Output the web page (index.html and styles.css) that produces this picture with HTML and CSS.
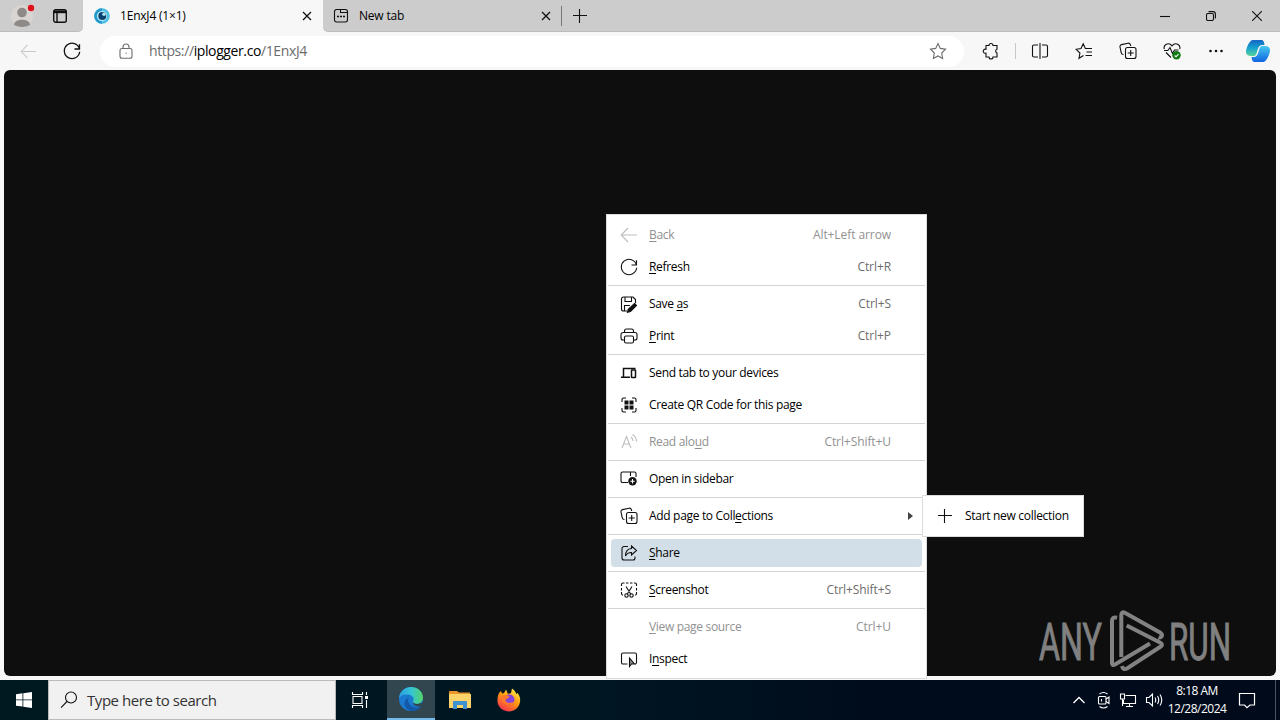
FILE: index.html
```html
<!DOCTYPE html>
<html lang="en">
<head>
    <meta charset="UTF-8">
    <meta name="viewport" content="width=device-width, initial-scale=1.0">
    <title>1EnxJ4 (1×1)</title>
    <link rel="stylesheet" href="styles.css">
</head>
<body>

    <!-- icons used more than once -->
    <svg class="defs">
        <symbol id="i-close" viewBox="0 0 10 10"><path d="M1 1l8 8M9 1l-8 8"/></symbol>
        <symbol id="i-back" viewBox="0 0 18 18"><path d="M17 9H1.5M8 2L1.2 9 8 16"/></symbol>
        <symbol id="i-refresh" viewBox="0 0 18 18"><path d="M16.5 7A7.7 7.7 0 1 0 16.7 9.8M16.5 2.2V7h-5"/></symbol>
        <symbol id="i-collect" viewBox="0 0 18 18"><path d="M4.5 12.5l-1-.2a2 2 0 0 1-1.3-1.6L1 5a2 2 0 0 1 1.5-2.4L9 1.2a2 2 0 0 1 2.3 1.3l.5 1.5"/><rect x="6.5" y="5.5" width="10.5" height="11" rx="2"/><path d="M11.7 8v6M8.7 11h6"/></symbol>
        <symbol id="i-plus" viewBox="0 0 14 14"><path d="M6.5 0v14M0 6.5h14"/></symbol>
    </svg>

    <div class="titlebar">
        <div class="titlebar-left">
            <svg class="avatar" width="24" height="24" viewBox="0 0 24 24"><circle cx="11" cy="12" r="11" fill="#d8d5d3"/><circle cx="11" cy="8.5" r="4.8" fill="#8d8a88"/><path d="M3 21c0-7 16-7 16 0q-8 4-16 0z" fill="#8d8a88"/><circle cx="20" cy="4" r="3.2" fill="#e0101b"/></svg>
            <svg class="ico tabs-ico" width="14" height="14" viewBox="0 0 14 14"><rect x=".7" y=".7" width="12.6" height="12.6" rx="2"/><path d="M1 2.3h12M4 4v9" /><path d="M1 3.5h12"/></svg>
        </div>
        <div class="tab tab-active">
            <svg width="16" height="16" viewBox="0 0 16 16"><circle cx="8" cy="8" r="6.5" fill="#b9e9f5" stroke="#4dbfe2" stroke-width="2.6"/><path d="M8 1.5A6.500 6.500 0 0 0 8 14.500" fill="none" stroke="#2398cc" stroke-width="2.600"/><circle cx="8.300" cy="8" r="4" fill="#0b4272"/><circle cx="10" cy="6.2" r="1.8" fill="#a9e3f3"/></svg>
            <span class="tab-title">1EnxJ4 (1×1)</span>
            <svg class="ico close" width="10" height="10"><use href="#i-close"/></svg>
        </div>
        <div class="titlebar-right">
            <div class="tab">
                <svg class="ico" width="16" height="16" viewBox="0 0 16 16"><rect x="1.5" y="1.5" width="13" height="12.5" rx="2.2"/><path d="M7.5 1.500v3h7"/><path d="M4 8.500h2M7 8.500h2M10 8.500h2" stroke-width="1.500"/></svg>
                <span class="tab-title">New tab</span>
                <svg class="ico close" width="10" height="10"><use href="#i-close"/></svg>
            </div>
            <div class="tab-sep"></div>
            <svg class="ico new-tab" width="14" height="14"><use href="#i-plus"/></svg>
            <div class="window-buttons">
                <svg class="ico" width="10" height="10" viewBox="0 0 10 10"><path d="M0 5.5h10"/></svg>
                <svg class="ico" width="10" height="10" viewBox="0 0 10 10"><rect x=".5" y="2.5" width="7" height="7" rx="1.5"/><path d="M2.5.6H7A2.4 2.4 0 0 1 9.4 3v4.5"/></svg>
                <svg class="ico" width="10" height="10" viewBox="0 0 10 10"><path d="M0 0l10 10M10 0L0 10"/></svg>
            </div>
        </div>
    </div>

    <div class="toolbar">
        <svg class="ico faded" width="17" height="17"><use href="#i-back"/></svg>
        <svg class="ico reload" width="18" height="18"><use href="#i-refresh"/></svg>
        <div class="address">
            <svg class="ico grey" width="14" height="16" viewBox="0 0 14 16"><rect x="1" y="5.5" width="12" height="9.7" rx="2"/><path d="M4 5.5V4a3 3 0 0 1 6 0v1.5M6.5 10.3h1.2"/></svg>
            <span class="url">https://<b>iplogger.co</b>/1EnxJ4</span>
            <svg class="ico grey" width="18" height="18" viewBox="0 0 18 18"><path d="M9 1.5l2.3 4.9 5.2.8-3.8 3.8.9 5.4L9 13.9l-4.6 2.5.9-5.4L1.5 7.2l5.2-.8z"/></svg>
        </div>
        <div class="tools">
            <svg class="ico" width="18" height="18" viewBox="0 0 18 18"><path d="M4 3.500H7a2 2 0 0 1 4 0h4v3.700a2 2 0 0 0 0 3.800v4h-4a2 2 0 0 1-4 0H4v-3.800a2.100 2.100 0 1 1 0-4z"/></svg>
            <i class="tool-sep"></i>
            <svg class="ico" width="18" height="18" viewBox="0 0 18 18"><path d="M7 3H3a1.500 1.500 0 0 0-1.500 1.500v9A1.500 1.500 0 0 0 3 15h4M11 3h4a1.500 1.500 0 0 1 1.500 1.500v9A1.500 1.500 0 0 1 15 15h-4M9 1v16"/></svg>
            <svg class="ico" width="18" height="18" viewBox="0 0 18 18"><path d="M8.500 13.500L4 16.300l.9-5.300-3.800-3.700L6 6.500l2.200-4.800L10.400 6.500H17M11.500 10H17M10.500 13.500H17"/></svg>
            <svg class="ico" width="18" height="18"><use href="#i-collect"/></svg>
            <svg class="ico" width="18" height="18" viewBox="0 0 18 18"><path d="M1.300 7C0 3 5.500-.5 9 3.800 12.500-.5 18 3 16.700 7M3 10.500l5 5M1 8.500h3.800L7 5.500l2.500 6 2-3.500h4"/><circle cx="13.500" cy="13.300" r="4.200" fill="#117a15" stroke="none"/><path d="M11.700 13.500l1.300 1.300 2.500-2.600" stroke="#fff"/></svg>
            <svg class="dots" width="18" height="18" viewBox="0 0 18 18"><circle cx="3.500" cy="9" r="1.300"/><circle cx="9" cy="9" r="1.300"/><circle cx="14.500" cy="9" r="1.300"/></svg>
        </div>
        <svg class="copilot" width="24" height="24" viewBox="0 0 24 24">
            <defs>
                <linearGradient id="cp1" x1="0" y1="0" x2="0" y2="1"><stop offset="0" stop-color="#1463c4"/><stop offset=".5" stop-color="#16a3cf"/><stop offset="1" stop-color="#57d59a"/></linearGradient>
                <linearGradient id="cp2" x1="0" y1="0" x2="0" y2="1"><stop offset="0" stop-color="#45c9f1"/><stop offset="1" stop-color="#1263df"/></linearGradient>
            </defs>
            <path d="M15.500 1H7C3.500 1 0 9 0 13c0 2.500 2 4 5 4h3.500Q10.500 16 11.500 11 13 6 16 6h2.500q-.5-5-3-5z" fill="url(#cp1)"/>
            <path d="M8.500 23H17c3.500 0 7-8 7-12 0-2.500-2-4-5-4h-3.500Q13.500 8 12.500 13 11 18 8 18H5.500q.5 5 3 5z" fill="url(#cp2)"/>
        </svg>
    </div>

    <div class="page"></div>

    <svg class="watermark" width="194" height="62" viewBox="0 0 194 62">
        <text transform="translate(1 50) scale(.61 1)" textLength="103" lengthAdjust="spacingAndGlyphs">ANY</text>
        <text transform="translate(131 50) scale(.58 1)" textLength="107" lengthAdjust="spacingAndGlyphs">RUN</text>
        <path d="M79 7.700Q74 6.500 74 11v42q0 3 3 1.500l35-21M83.300 47V5q0-4 4-2L122 22.500q3 2 1.500 4-1 1.500-3 .8M88.700 15.500L122 32.500q4 2 0 4.500L89 58.500q-4 2-5-2.500"/>
    </svg>

    <div class="menu">
        <div class="item off"><svg class="ico" width="18" height="18"><use href="#i-back"/></svg><span><u>B</u>ack</span><kbd>Alt+Left arrow</kbd></div>
        <div class="item"><svg class="ico" width="18" height="18"><use href="#i-refresh"/></svg><span><u>R</u>efresh</span><kbd>Ctrl+R</kbd></div>
        <hr>
        <div class="item"><svg class="ico" width="18" height="18" viewBox="0 0 18 18"><path d="M7 16H3.500a2 2 0 0 1-2-2V4a2 2 0 0 1 2-2H13l2.500 2.500V8M5 2v4.500h6.500V2M4.500 16v-5.500H10"/><path d="M14.500 8.500l2 2-6 6-3 .8.800-3z" fill="#111"/></svg><span>Save <u>a</u>s</span><kbd>Ctrl+S</kbd></div>
        <div class="item"><svg class="ico" width="18" height="18" viewBox="0 0 18 18"><path d="M4.500 13H3a2 2 0 0 1-2-2V7.500a2 2 0 0 1 2-2h12a2 2 0 0 1 2 2V11a2 2 0 0 1-2 2h-1.500M4.500 5.500V4a2 2 0 0 1 2-2h5a2 2 0 0 1 2 2v1.500"/><rect x="4.500" y="9" width="9" height="7" rx="1.500"/></svg><span><u>P</u>rint</span><kbd>Ctrl+P</kbd></div>
        <hr>
        <div class="item"><svg class="ico" width="18" height="18" viewBox="0 0 18 18"><path d="M15.500 4.500H3.500v8.500M1 13.300h9" stroke-width="1.500"/><rect x="11.500" y="6" width="4" height="7.500" rx=".5" stroke-width="1.500"/></svg><span>Send tab to your devices</span></div>
        <div class="item"><svg class="ico" width="18" height="18" viewBox="0 0 18 18"><path d="M2 6V3.500A1.500 1.500 0 0 1 3.500 2H6M12 2h2.500A1.500 1.500 0 0 1 16 3.500V6M16 12v2.500a1.500 1.500 0 0 1-1.500 1.500H12M6 16H3.500A1.500 1.500 0 0 1 2 14.500V12"/><path d="M4.500 4.500h4v4h-4zM9.500 4.500h4v4h-4zM4.500 9.500h4v4h-4zM9.500 9.500h4v4h-4z" fill="#111" stroke="none"/></svg><span>Create QR Code for this page</span></div>
        <hr>
        <div class="item off"><svg class="ico" width="18" height="18" viewBox="0 0 18 18"><path d="M2 15L6.500 3.500 11 15M3.500 11h6M11 4q2 1.500 2 4M12.500 1.500q4 2.500 4 7"/></svg><span>Read alo<u>u</u>d</span><kbd>Ctrl+Shift+U</kbd></div>
        <hr>
        <div class="item"><svg class="ico" width="18" height="18" viewBox="0 0 18 18"><path d="M8 12.500H2.500A1.500 1.500 0 0 1 1 11V3.500A1.500 1.500 0 0 1 2.500 2h12A1.500 1.500 0 0 1 16 3.500V7M10.500 2v4"/><circle cx="12.500" cy="11.200" r="4.200" fill="#111" stroke="none"/><path d="M12.500 9v4.400M10.300 11.200h4.400" stroke="#fff"/></svg><span>Open in sidebar</span></div>
        <hr>
        <div class="item"><svg class="ico" width="18" height="18"><use href="#i-collect"/></svg><span>Add page to Coll<u>e</u>ctions</span><i class="arrow"></i></div>
        <hr>
        <div class="item hover"><svg class="ico" width="18" height="18" viewBox="0 0 18 18"><path d="M8 2.500H4a2 2 0 0 0-2 2V14a2 2 0 0 0 2 2h9a2 2 0 0 0 2-2v-1.500"/><path d="M11.500 2l5 4.500-5 4.500V8.500Q7.500 8.300 5.500 12 5.500 5 11.500 4.500z"/></svg><span><u>S</u>hare</span></div>
        <hr>
        <div class="item"><svg class="ico" width="18" height="18" viewBox="0 0 18 18"><path d="M1.500 5V3.500A1.500 1.500 0 0 1 3 2h1.500M6 2h2.500M10 2h2.500M14 2h1a1.500 1.500 0 0 1 1.500 1.500V5M16.500 7v2.500M16.500 11v1.500A1.500 1.500 0 0 1 15 14M1.500 7v2.500M1.500 11v1.500A1.500 1.500 0 0 0 3 14M6 5.500l5 8M12 5.500l-5 8"/><circle cx="6.500" cy="14.500" r="1.700"/><circle cx="11.500" cy="14.500" r="1.700"/></svg><span><u>S</u>creenshot</span><kbd>Ctrl+Shift+S</kbd></div>
        <hr>
        <div class="item off"><svg width="18" height="18"></svg><span><u>V</u>iew page source</span><kbd>Ctrl+U</kbd></div>
        <div class="item"><svg class="ico" width="18" height="18" viewBox="0 0 18 18"><path d="M7.500 14H3a1.500 1.500 0 0 1-1.500-1.500v-8A1.500 1.500 0 0 1 3 3h12a1.500 1.500 0 0 1 1.500 1.500v8A1.500 1.500 0 0 1 15 14"/><path d="M9.500 8v8.500l2-2.500h3z" fill="#888"/></svg><span>I<u>n</u>spect</span></div>
    </div>

    <div class="submenu">
        <svg class="ico" width="14" height="14"><use href="#i-plus"/></svg>
        <span>Start new collection</span>
    </div>

    <div class="taskbar">
        <div class="start">
            <svg width="16" height="16" viewBox="0 0 16 16" fill="#fff"><path d="M0 2.200l6.500-.9v6.200H0zM7.300 1.200L16 0v7.500H7.300zM0 8.300h6.500v6.300L0 13.700zM7.300 8.300H16V16l-8.700-1.200z"/></svg>
        </div>
        <div class="search">
            <svg class="ico" width="18" height="18" viewBox="0 0 18 18"><circle cx="11" cy="6.500" r="5.500"/><path d="M7 10.500L1 16.700"/></svg>
            <span>Type here to search</span>
        </div>
        <div class="app">
            <svg class="ico light" width="18" height="18" viewBox="0 0 18 18"><path d="M2 5.500h9v7H2zM1.500 1v2.500h10V1M1.500 17v-2.500h10V17M15.500 1v3M15.500 9v8"/><path d="M14 5h3v3h-3z" fill="#fff" stroke="none"/></svg>
        </div>
        <div class="app app-active">
            <svg width="24" height="24" viewBox="0 0 24 24">
                <defs>
                    <linearGradient id="ed1" x1="0" x2="1"><stop offset="0" stop-color="#2a9fe0"/><stop offset=".5" stop-color="#35c4d6"/><stop offset="1" stop-color="#55d46a"/></linearGradient>
                </defs>
                <circle cx="12" cy="12" r="12" fill="#1b7ad0"/>
                <path d="M0 11C1 4 6 0 12 0c7 0 12 5 12 10.500 0 4-3 6.500-6.500 6.500-3 0-4.500-1.300-3.500-2.800C16 11 13 8 9 7.500 5 7 2 8 0 11z" fill="url(#ed1)"/>
                <path d="M9.500 11c-2 5 3 9.500 8 9.500 2 0 4-.7 5-1.600-2 3-6 5.100-10 5.100-4-.5-7-4-7-8 0-2.500 1.500-4.500 4-5z" fill="#1458a8"/>
                <path d="M14 14.800c1.500 2.700 5.500 3 9 .8l1 .4-1.800 3c-3.500 1.500-8.500 0-8.200-4.200z" fill="#32464f"/>
            </svg>
        </div>
        <div class="app">
            <svg width="22" height="20" viewBox="0 0 22 20"><path d="M0 2q0-1 1-1h7l2 1.500h11v15H0z" fill="#e9952b"/><path d="M0 4h22v14H0z" fill="#fbd36b"/><path d="M4 19v-7q0-1 1-1h12q1 0 1 1v7h-4v-4H8v4z" fill="#3f92d2"/></svg>
        </div>
        <div class="app">
            <svg width="24" height="24" viewBox="0 0 24 24">
                <defs><linearGradient id="ff1" x1=".8" y1="0" x2=".2" y2="1"><stop offset="0" stop-color="#fff04a"/><stop offset=".45" stop-color="#ff980e"/><stop offset="1" stop-color="#f52a57"/></linearGradient></defs>
                <path d="M2 5l2-2 1 2.500L7 5l2-3.500L11 6l3-1 1-4.500c3 2 4 4 4 5.500l1.500-1C23 8 23.500 11 23 14c-1 6-6 9.500-11 9.500S1 20 .5 13.500C.3 10 1 7 2 5z" fill="url(#ff1)"/>
                <circle cx="12.500" cy="11.500" r="5" fill="#8544dc"/>
                <path d="M4 9c3-2.500 6-2 8.500-.5C11 11 9 10.500 8.500 12c0 3 5 4 8 1.500-1 5-11 5-12.500-4.500z" fill="#ff7a2a"/>
            </svg>
        </div>
        <div class="tray">
            <svg class="ico light" width="14" height="14" viewBox="0 0 14 14"><path d="M1.500 10L7 4.500l5.500 5.500" stroke-width="1.300"/></svg>
            <svg class="ico light" width="14" height="18" viewBox="0 0 14 18"><rect x="1.500" y="5.500" width="7.500" height="7.500" rx="1"/><path d="M9 8l3-2v6.500l-3-2M2.500 3q4-3 8 0M2.500 15.500q4 3 8 0M4.500 8v2.500"/></svg>
            <svg class="ico light" width="18" height="16" viewBox="0 0 18 16"><path d="M6.500 3.500h10v8h-12V8M10.500 11.500V14M7 14.500h7M1.500 2h4v5h-4zM3.500 7v7"/></svg>
            <svg class="ico light" width="18" height="16" viewBox="0 0 18 16"><path d="M1.500 5.500H4l3.500-3.500v12L4 10.500H1.500zM10 5.500q1.500 2.500 0 5M12.500 4q2.500 4 0 8M15 2.500q3.500 5.500 0 11"/></svg>
            <div class="clock"><span>8:18 AM</span><span>12/28/2024</span></div>
            <svg class="ico light" width="18" height="18" viewBox="0 0 18 18"><path d="M1.500 2.500h15v11.500H12L9 16.700 6.500 14h-5z" stroke-width="1.200"/></svg>
            <i class="desktop-edge"></i>
        </div>
    </div>

</body>
</html>
```
FILE: styles.css
```css
* {
    box-sizing: border-box;
}
body {
    margin: 0;
    width: 1280px;
    height: 720px;
    overflow: hidden;
    display: flex;
    flex-direction: column;
    position: relative;
    background: #f7f7f7;
    font-family: "Open Sans", sans-serif;
    font-size: 12px;
    color: #000;
}
svg {
    display: block;
    flex: none;
}
.defs {
    position: absolute;
    width: 0;
    height: 0;
}
.ico {
    fill: none;
    stroke: #111;
    stroke-width: 1.1;
}
.grey {
    stroke: #6c6c6c;
}
.faded {
    stroke: #c9c9c9;
}
.light {
    stroke: #fff;
}

/* title bar */
.titlebar {
    display: flex;
    height: 32px;
    flex: none;
}
.titlebar-left {
    width: 83px;
    display: flex;
    align-items: center;
    padding-left: 11px;
    background: #cdcdcd;
    border-bottom: 1px solid #bdbdbd;
    border-radius: 0 0 5px 0;
}
.tabs-ico {
    margin-left: 18px;
    stroke-width: 1.4;
}
.tab {
    width: 240px;
    display: flex;
    align-items: center;
    padding: 0 11px;
}
.tab-title {
    flex: 1;
    margin-left: 10px;
    padding-bottom: 1px;
    letter-spacing: -0.2px;
}
.titlebar-right .tab {
    width: 238px;
    padding: 0 10px;
}
.titlebar-right .tab-title {
    padding-bottom: 0;
}
.close {
    stroke-width: 1.3;
}
.titlebar-right {
    flex: 1;
    display: flex;
    align-items: center;
    background: #cccccc;
    border-bottom: 1px solid #bdbdbd;
    border-radius: 0 0 0 5px;
}
.tab-sep {
    width: 1px;
    height: 20px;
    background: #777;
}
.new-tab {
    margin-left: 11px;
}
.window-buttons {
    display: flex;
    gap: 36px;
    margin-left: auto;
    padding-right: 18px;
}

/* toolbar */
.toolbar {
    display: flex;
    align-items: center;
    flex: none;
    height: 38px;
    padding-left: 20px;
}
.reload {
    margin-left: 26px;
    stroke-width: 1.3;
}
.address {
    display: flex;
    align-items: center;
    width: 864px;
    height: 31px;
    margin-left: 19px;
    padding: 0 17px 0 19px;
    background: #fff;
    border-radius: 16px;
}
.url {
    flex: 1;
    margin-left: 16px;
    padding-bottom: 1px;
    font-size: 14px;
    letter-spacing: -0.39px;
    color: #6b6b6b;
}
.url b {
    font-weight: normal;
    color: #000;
}
.tools {
    display: flex;
    align-items: center;
    justify-content: space-between;
    width: 243px;
    margin-left: 18px;
}
.tool-sep {
    width: 1px;
    height: 16px;
    margin: 0 -11px;
    background: #c8c8c8;
}
.dots {
    fill: #111;
}
.copilot {
    margin-left: 21px;
}

.page {
    flex: none;
    height: 606px;
    margin: 0 4px 4px;
    background: #0e0e0e;
    border-radius: 6px;
}
.watermark {
    position: absolute;
    left: 1038px;
    top: 610px;
    fill: none;
    stroke: #828282;
    stroke-width: 4;
}
.watermark text {
    font-family: Roboto, sans-serif;
    font-size: 51px;
    fill: #808080;
    stroke: #808080;
    stroke-width: 1;
}

/* context menu */
.menu {
    position: absolute;
    left: 606px;
    top: 214px;
    width: 321px;
    height: 465px;
    padding: 4px 0;
    background: #fff;
    border: 1px solid #dcdcdc;
}
.menu hr {
    height: 1px;
    margin: 2px 1px;
    border: 0;
    background: #d3d3d3;
}
.item {
    display: flex;
    align-items: center;
    height: 32px;
    padding: 0 35px 0 13px;
}
.item span {
    flex: 1;
    margin-left: 11px;
    padding-bottom: 1px;
    letter-spacing: -0.32px;
}
.item u {
    text-underline-offset: 2px;
}
.item kbd {
    font-family: inherit;
    padding-bottom: 1px;
    letter-spacing: -0.08px;
    color: #6c6c6c;
}
.off,
.off kbd {
    color: #919191;
}
.off .ico {
    stroke: #bdbdbd;
}
.hover {
    height: 28px;
    margin: 4px;
    padding-left: 9px;
    background: #d3dfe8;
    border-radius: 4px;
}
.arrow {
    margin-right: -22px;
    border-left: 5px solid #444;
    border-top: 4px solid transparent;
    border-bottom: 4px solid transparent;
}
.submenu {
    position: absolute;
    left: 922px;
    top: 495px;
    width: 162px;
    height: 42px;
    display: flex;
    align-items: center;
    padding-left: 15px;
    background: #fff;
    border: 1px solid #dcdcdc;
    letter-spacing: -0.3px;
}
.submenu span {
    margin-left: 13px;
    padding-bottom: 1px;
}

/* windows taskbar */
.taskbar {
    display: flex;
    flex: none;
    height: 40px;
    background: linear-gradient(90deg, #001820 0, #001722 45%, #000b1c 70%, #000a1a 100%);
}
.start {
    width: 48px;
    display: flex;
    align-items: center;
    justify-content: center;
}
.search {
    width: 288px;
    display: flex;
    align-items: center;
    padding-left: 11px;
    background: #f1f1f1;
    border: 1px solid #b9b9b9;
    font-size: 15px;
    letter-spacing: -0.45px;
    color: #333;
}
.search span {
    margin-left: 9px;
}
.app {
    width: 48px;
    display: flex;
    align-items: center;
    justify-content: center;
    margin-right: 1px;
}
.app-active {
    margin-left: 2px;
    background: #32464f;
    border-bottom: 2px solid #76b9ed;
}
.tray {
    display: flex;
    align-items: center;
    margin-left: auto;
}
.tray .ico {
    margin-right: 8px;
}
.tray .ico:first-child {
    margin-right: 11px;
}
.clock {
    display: flex;
    flex-direction: column;
    align-items: center;
    width: 54px;
    line-height: 18px;
    color: #fff;
    letter-spacing: -0.5px;
    margin: 0 14px 0 -1px;
    white-space: nowrap;
}
.desktop-edge {
    width: 1px;
    height: 40px;
    margin: 0 4px 0 11px;
    background: #4a535e;
}
```
